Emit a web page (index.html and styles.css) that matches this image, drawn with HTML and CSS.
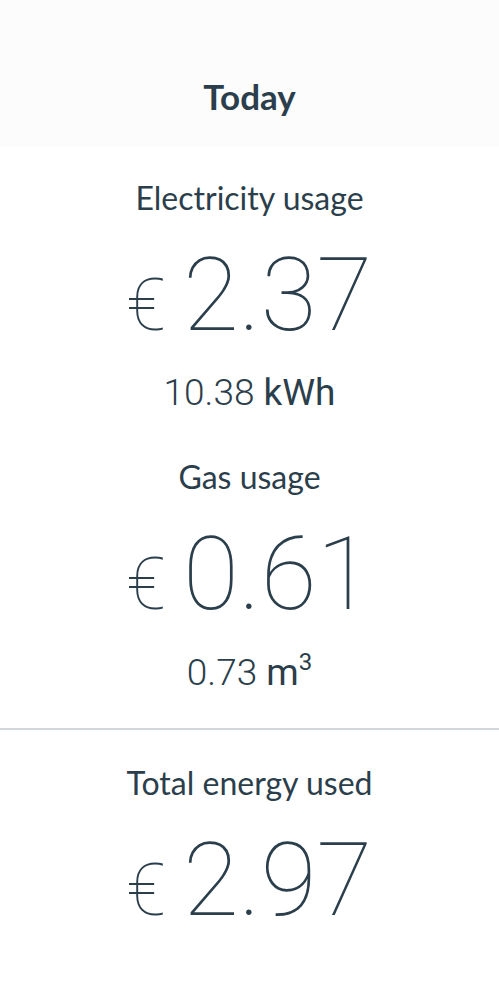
FILE: index.html
```html
<!DOCTYPE html>
<html lang="en">
<head>
    <meta charset="UTF-8">
    <meta name="viewport" content="width=device-width, initial-scale=1.0">
    <title>Today</title>
    <link rel="stylesheet" href="styles.css">
</head>
<body>
    <header class="header">
        <h1>Today</h1>
    </header>

    <section class="usage">
        <h2 class="label">Electricity usage</h2>
        <div class="amount"><span class="currency">€</span>2.37</div>
        <div class="unit">10.38 <span class="unit-name">kWh</span></div>
    </section>

    <section class="usage">
        <h2 class="label">Gas usage</h2>
        <div class="amount"><span class="currency">€</span>0.61</div>
        <div class="unit">0.73 <span class="unit-name">m<sup>3</sup></span></div>
    </section>

    <hr class="divider">

    <section class="usage total">
        <h2 class="label">Total energy used</h2>
        <div class="amount"><span class="currency">€</span>2.97</div>
    </section>
</body>
</html>
```

FILE: styles.css
```css
body {
    margin: 0;
    background-color: #fff;
    color: #2b3e4b;
    font-family: Lato, "Open Sans", sans-serif;
    text-align: center;
}

.header {
    box-sizing: border-box;
    height: 147px;
    padding-top: 75px;
    background-color: #fcfcfc;
}

.header h1 {
    margin: 0;
    font-size: 35px;
    font-weight: 700;
    line-height: 1.2;
}

.usage {
    display: flex;
    flex-direction: column;
    align-items: center;
}

.label {
    margin: 32px 0 0;
    font-size: 32px;
    font-weight: 400;
    line-height: 1.2;
}

.amount {
    margin-top: 27px;
    font-family: Roboto, sans-serif;
    font-size: 102px;
    font-weight: 100;
    line-height: 1;
}

.currency {
    margin-right: 17px;
    font-size: 72px;
}

.unit {
    margin-top: 25px;
    font-family: Roboto, sans-serif;
    font-size: 37px;
    font-weight: 300;
    line-height: 1.2;
}

.unit-name {
    font-weight: 400;
}

.unit sup {
    font-size: 24px;
    line-height: 1;
    vertical-align: 15px;
}

.usage + .usage .label {
    margin-top: 42px;
}

.divider {
    margin: 32px 0 0;
    border: none;
    border-top: 2px solid #d3d7da;
}

.total .label {
    margin-top: 34px;
}
```
